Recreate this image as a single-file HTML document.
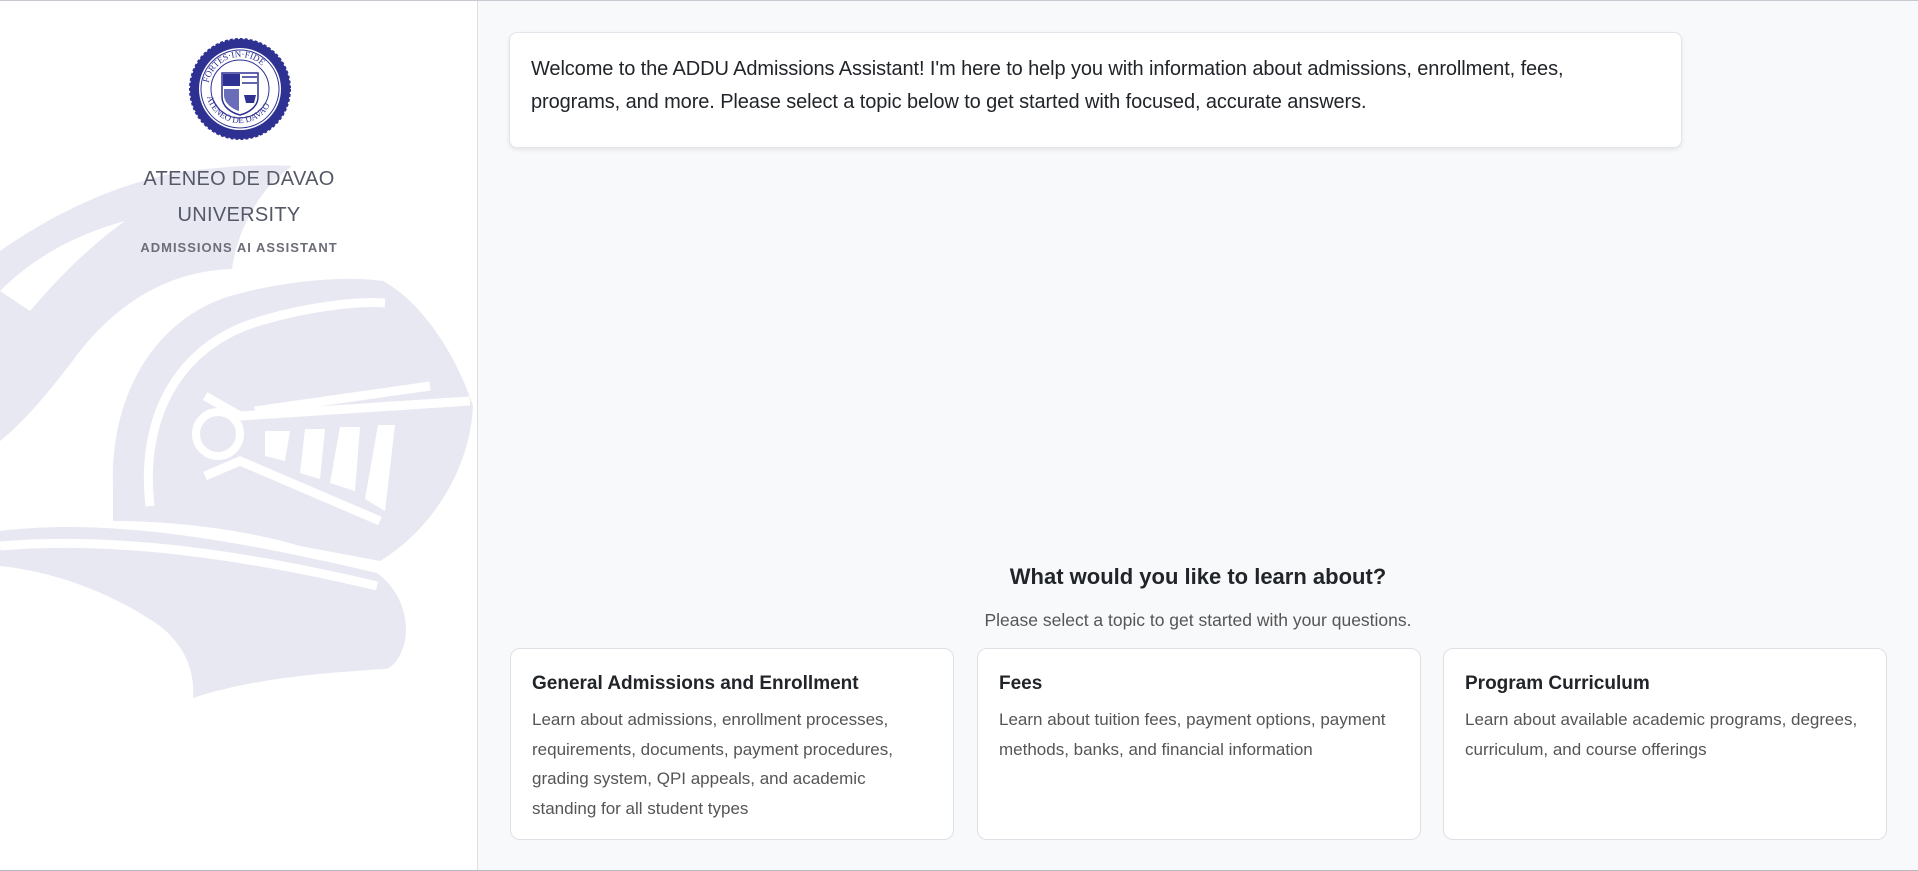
<!DOCTYPE html>
<html><head><meta charset="utf-8"><style>
*{box-sizing:border-box;margin:0;padding:0}
body{width:1918px;height:871px;overflow:hidden;background:#f8f9fa;font-family:"Liberation Sans",sans-serif;color:#212529;position:relative}
.top{position:absolute;left:0;top:0;width:1918px;height:1px;background:#c8c8d0}
.bot{position:absolute;left:0;top:870px;width:1918px;height:1px;background:#b8b8c0}
.side{position:absolute;left:0;top:1px;width:478px;height:869px;background:#fff;border-right:1px solid #dcdde2;overflow:hidden}
.t1{position:absolute;left:0;width:478px;text-align:center;font-size:20px;color:#555866;font-weight:300;letter-spacing:0.3px}
.t2{position:absolute;left:0;width:478px;text-align:center;font-size:13px;font-weight:bold;color:#6b6e78;letter-spacing:1px}
.welcome{position:absolute;left:509px;top:32px;width:1173px;height:116px;background:#fff;border:1px solid #e4e5ea;border-radius:8px;box-shadow:0 2px 4px rgba(0,0,0,.08);padding:20px 21px;font-size:20px;line-height:33px;white-space:nowrap;letter-spacing:-0.1px}
h2{position:absolute;left:478px;width:1440px;top:564px;text-align:center;font-size:22px;font-weight:bold;color:#212529}
.sub{position:absolute;left:478px;width:1440px;top:610px;text-align:center;font-size:17.5px;color:#555}
.card{position:absolute;top:648px;width:444px;height:192px;background:#fff;border:1px solid #dfe0e5;border-radius:10px;padding:24px 21px;white-space:nowrap}
.card b{display:block;font-size:19px;color:#212529;margin-bottom:10px;font-weight:bold}
.card p{font-size:17px;line-height:29.5px;color:#555}
</style></head><body>
<div class="top"></div>
<div class="side">
<svg width="478" height="869" style="position:absolute;left:0;top:0" viewBox="0 0 478 869">
<g fill="#e8e8f3">
<path d="M0,250 C50,215 110,185 175,172 C215,166 260,163 292,165 C262,185 238,225 232,268 C170,270 120,300 80,350 C50,390 25,420 0,440 Z"/>
<path d="M0,290 C30,260 70,235 125,220 C90,245 60,275 30,310 Z" fill="#fff"/>
<path d="M113,485 C110,400 150,320 230,295 C290,278 350,275 383,280 C420,300 455,350 473,405 C470,470 430,530 380,560 L300,545 C250,530 180,520 113,520 Z"/>
<path d="M0,530 C120,515 260,545 377,572 C395,585 410,610 405,640 C400,660 390,668 385,668 C320,672 250,678 193,697 C195,670 185,645 160,625 C110,590 50,570 0,565 Z"/>
</g>
<g fill="none" stroke="#fff" stroke-width="9">
<path d="M150,505 C140,420 175,345 260,320 C310,305 360,300 385,302"/>
<path d="M205,395 L240,415 L470,400"/>
<path d="M205,475 L240,460 L380,520"/>
<path d="M0,545 C120,535 250,555 377,585"/>
<path d="M255,410 L430,385"/>
</g>
<circle cx="218" cy="433" r="22" fill="#e8e8f3" stroke="#fff" stroke-width="8"/>
<g fill="#fff">
<path d="M265,430 L290,430 L285,460 L265,455 Z"/>
<path d="M305,428 L325,428 L320,478 L300,472 Z"/>
<path d="M340,426 L360,426 L355,490 L330,482 Z"/>
<path d="M378,424 L395,424 L385,510 L365,498 Z"/>
</g>
</svg>
<svg width="104" height="104" style="position:absolute;left:188px;top:36px" viewBox="0 0 104 104">
<circle cx="52" cy="52" r="50" fill="#2e3192" stroke="#2e3192" stroke-width="2" stroke-dasharray="3 2"/>
<circle cx="52" cy="52" r="41" fill="#fff"/>
<circle cx="52" cy="52" r="39" fill="none" stroke="#2e3192" stroke-width="1"/>
<circle cx="52" cy="52" r="29" fill="none" stroke="#2e3192" stroke-width="1"/>
<path id="ta" d="M20,52 A32,32 0 0 1 84,52" fill="none"/>
<path id="tb" d="M18,52 A34,34 0 0 0 86,52" fill="none"/>
<text font-size="9" fill="#2e3192" font-family="Liberation Serif,serif"><textPath href="#ta" startOffset="6">FORTES·IN·FIDE</textPath></text>
<text font-size="9" fill="#2e3192" font-family="Liberation Serif,serif"><textPath href="#tb" startOffset="8">ATENEO DE DAVAO</textPath></text>
<path d="M34,36 L70,36 L70,60 C70,70 60,76 52,78 C44,76 34,70 34,60 Z" fill="#fff" stroke="#2e3192" stroke-width="1.5"/>
<rect x="35" y="37" width="17" height="12" fill="#2e3192"/>
<path d="M36,52 L51,52 L51,74 C44,72 36,66 36,58 Z" fill="#6a6db8"/>
<path d="M54,40 L69,40 M54,46 L69,46" stroke="#2e3192" stroke-width="1.5"/>
<path d="M56,58 L68,58 L66,66 L58,66 Z" fill="#2e3192"/>
</svg>
<div class="t1" style="top:167px">ATENEO DE DAVAO</div>
<div class="t1" style="top:203px">UNIVERSITY</div>
<div class="t2" style="top:239px">ADMISSIONS AI ASSISTANT</div>
</div>
<div class="welcome">Welcome to the ADDU Admissions Assistant! I'm here to help you with information about admissions, enrollment, fees,<br>programs, and more. Please select a topic below to get started with focused, accurate answers.</div>
<h2>What would you like to learn about?</h2>
<div class="sub">Please select a topic to get started with your questions.</div>
<div class="card" style="left:510px"><b>General Admissions and Enrollment</b><p>Learn about admissions, enrollment processes,<br>requirements, documents, payment procedures,<br>grading system, QPI appeals, and academic<br>standing for all student types</p></div>
<div class="card" style="left:977px"><b>Fees</b><p>Learn about tuition fees, payment options, payment<br>methods, banks, and financial information</p></div>
<div class="card" style="left:1443px"><b>Program Curriculum</b><p>Learn about available academic programs, degrees,<br>curriculum, and course offerings</p></div>
<div class="bot"></div>
</body></html>
